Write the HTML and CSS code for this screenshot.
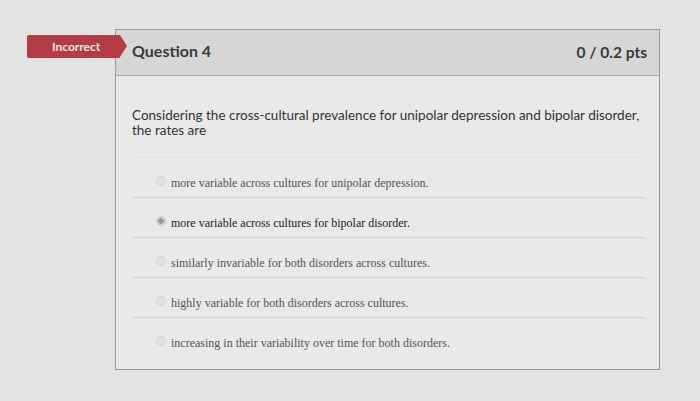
FILE: index.html
```html
<!DOCTYPE html>
<html>
<head>
<meta charset="utf-8">
<link rel="stylesheet" href="styles.css">
</head>
<body>
<div class="page">
  <div class="quiz">
    <div class="badge">Incorrect</div>
    <div class="card">
      <div class="card-head">
        <span class="q-title">Question 4</span>
        <span class="q-pts">0 / 0.2 pts</span>
      </div>
      <div class="card-body">
        <p class="q-text">Considering the cross-cultural prevalence for unipolar depression and bipolar disorder, the rates are</p>
        <ul class="answers">
          <li class="answer"><span class="radio"></span><span class="a-text">more variable across cultures for unipolar depression.</span></li>
          <li class="answer selected"><span class="radio"></span><span class="a-text">more variable across cultures for bipolar disorder.</span></li>
          <li class="answer"><span class="radio"></span><span class="a-text">similarly invariable for both disorders across cultures.</span></li>
          <li class="answer"><span class="radio"></span><span class="a-text">highly variable for both disorders across cultures.</span></li>
          <li class="answer"><span class="radio"></span><span class="a-text">increasing in their variability over time for both disorders.</span></li>
        </ul>
      </div>
    </div>
  </div>
</div>
</body>
</html>
```

FILE: styles.css
```css
html, body {
  margin: 0;
  padding: 0;
}
body {
  width: 700px;
  height: 401px;
  overflow: hidden;
  background: #e3e3e3;
  font-family: Lato, "Liberation Sans", sans-serif;
}
.page {
  padding: 29px 0 0 27px;
}
.quiz {
  position: relative;
  padding-left: 88px;
}
.badge {
  position: absolute;
  left: 0;
  top: 6px;
  width: 93px;
  height: 23px;
  background: #b43c45;
  color: #f4e9ea;
  font-size: 12px;
  font-weight: 700;
  line-height: 23px;
  padding-left: 25px;
  box-sizing: border-box;
  border-radius: 2px 0 0 2px;
  z-index: 2;
}
.badge::after {
  content: "";
  position: absolute;
  right: -7px;
  top: 0;
  border-top: 11.5px solid transparent;
  border-bottom: 11.5px solid transparent;
  border-left: 7px solid #b43c45;
}
.card {
  width: 545px;
  height: 341px;
  border: 1px solid #9a9a9a;
  background: #e9e9e9;
  box-sizing: border-box;
}
.card-head {
  height: 46px;
  background: #d6d6d6;
  border-bottom: 1px solid #a8a8a8;
  display: flex;
  align-items: center;
  justify-content: space-between;
  padding: 0 12px 0 16px;
  box-sizing: border-box;
  color: #3a3a3a;
  font-size: 16px;
  font-weight: 700;
}
.q-title {
  margin-top: -4px;
}
.q-pts {
  margin-top: -2px;
  font-size: 15.5px;
}
.card-body {
  padding: 32px 14px 0 16px;
}
.q-text {
  margin: 0;
  font-size: 13.5px;
  line-height: 15px;
  color: #333;
  width: 520px;
}
.answers {
  list-style: none;
  margin: 19px 0 0 0;
  padding: 0;
}
.answer {
  height: 40px;
  border-top: 1px solid #d4d4d4;
  box-sizing: border-box;
  display: flex;
  align-items: center;
  padding: 12px 0 0 24px;
  font-family: "Liberation Serif", "Times New Roman", serif;
  font-size: 12px;
  color: #555;
}
.answer:first-child {
  border-top-color: #e0e0e0;
}
.radio {
  width: 10px;
  height: 10px;
  border-radius: 50%;
  background: #e2e2e2;
  border: 1px solid #d6d6d6;
  box-sizing: border-box;
  margin-right: 5px;
  margin-top: -6px;
  flex: none;
}
.selected {
  color: #1e1e1e;
}
.selected .radio {
  background: radial-gradient(circle, #9a9a9a 0 2.5px, #d2d2d2 3px);
  border-color: #c8c8c8;
}
```
